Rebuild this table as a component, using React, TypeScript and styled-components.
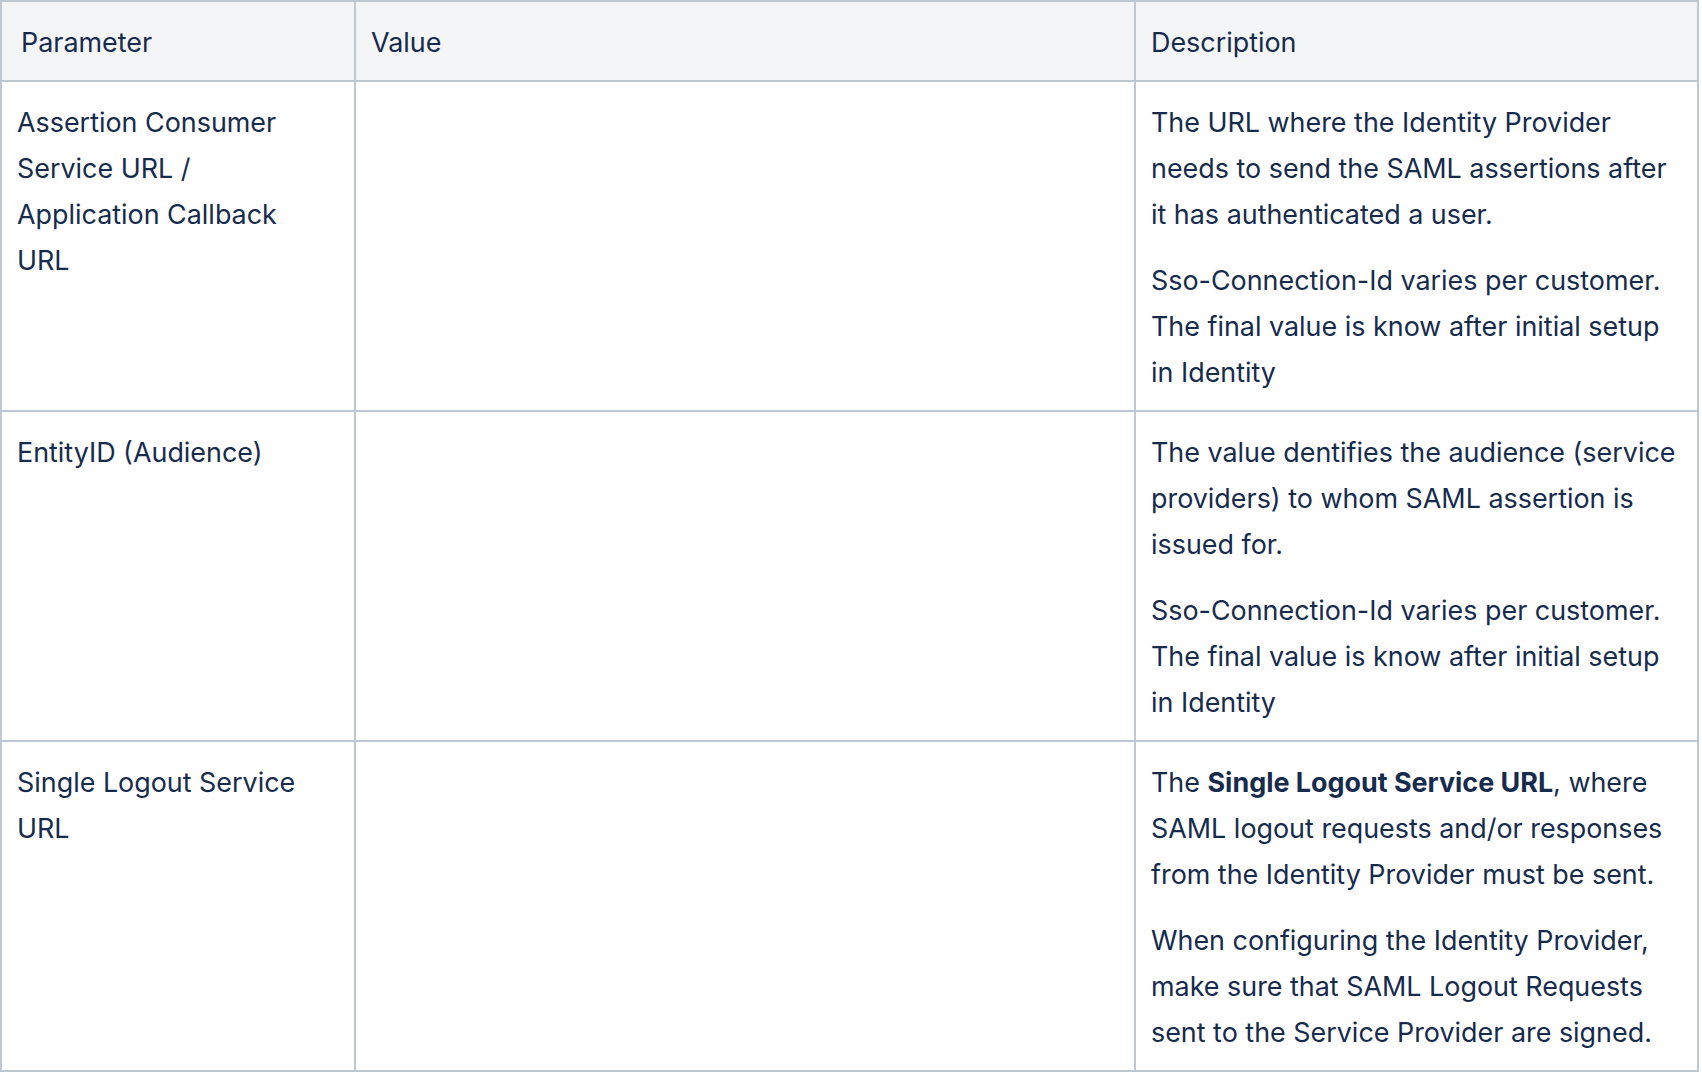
import React from 'react';
import styled, { createGlobalStyle } from 'styled-components';

const GlobalStyle = createGlobalStyle`
  html, body {
    margin: 0;
    padding: 0;
    background: #ffffff;
  }
  body {
    font-family: Inter, "Noto Sans", "Liberation Sans", sans-serif;
    color: #172b4d;
  }
`;

interface Row {
  param: React.ReactNode;
  description: React.ReactNode[];
}

const rows: Row[] = [
  {
    param: (
      <>
        Assertion Consumer
        <br />
        Service URL /
        <br />
        Application Callback
        <br />
        URL
      </>
    ),
    description: [
      <>
        The URL where the Identity Provider
        <br />
        needs to send the SAML assertions after
        <br />
        it has authenticated a user.
      </>,
      <>
        Sso-Connection-Id varies per customer.
        <br />
        The final value is know after initial setup
        <br />
        in Identity
      </>,
    ],
  },
  {
    param: 'EntityID (Audience)',
    description: [
      <>
        The value dentifies the audience (service
        <br />
        providers) to whom SAML assertion is
        <br />
        issued for.
      </>,
      <>
        Sso-Connection-Id varies per customer.
        <br />
        The final value is know after initial setup
        <br />
        in Identity
      </>,
    ],
  },
  {
    param: (
      <>
        Single Logout Service
        <br />
        URL
      </>
    ),
    description: [
      <>
        The <strong>Single Logout Service URL</strong>, where
        <br />
        SAML logout requests and/or responses
        <br />
        from the Identity Provider must be sent.
      </>,
      <>
        When configuring the Identity Provider,
        <br />
        make sure that SAML Logout Requests
        <br />
        sent to the Service Provider are signed.
      </>,
    ],
  },
];

function App() {
  return (
    <>
      <GlobalStyle />
      <Table>
        <HeadCell first>Parameter</HeadCell>
        <HeadCell>Value</HeadCell>
        <HeadCell>Description</HeadCell>
        {rows.map((row, i) => (
          <React.Fragment key={i}>
            <Cell>
              <Para>{row.param}</Para>
            </Cell>
            <Cell />
            <Cell>
              {row.description.map((d, j) => (
                <Para key={j}>{d}</Para>
              ))}
            </Cell>
          </React.Fragment>
        ))}
      </Table>
    </>
  );
}

export default App;

const Table = styled.div`
  display: grid;
  grid-template-columns: 352px 778px 561px;
  grid-auto-rows: auto;
  gap: 2px;
  padding: 2px;
  width: 1699px;
  box-sizing: border-box;
  background-color: #c1c7d0;
  font-size: 26.9px;
  line-height: 46px;
  color: #172b4d;
`;

const HeadCell = styled.div<{ first?: boolean }>`
  background-color: #f4f5f7;
  padding: 17px 15px 15px ${(props) => (props.first ? '19px' : '15px')};
  font-weight: 400;
  white-space: nowrap;
`;

const Cell = styled.div`
  background-color: #ffffff;
  padding: 17px 15px 15px;
  white-space: nowrap;

  strong {
    font-weight: 700;
  }
`;

const Para = styled.p`
  margin: 0;

  & + & {
    margin-top: 20px;
  }
`;
